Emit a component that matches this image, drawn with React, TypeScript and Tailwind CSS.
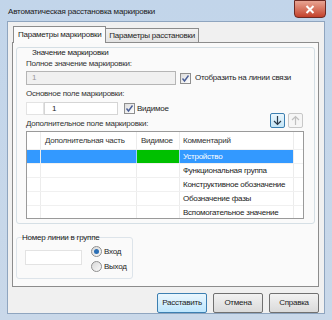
import React from 'react';

const font = { fontFamily: '"Liberation Sans", Arial, sans-serif' };

function Check({ checked = true }: { checked?: boolean }) {
  return (
    <span className="w-[11px] h-[11px] border border-[#8f8f8f] bg-gradient-to-br from-[#dcdcdc] to-[#ffffff] flex items-center justify-center shrink-0">
      {checked && (
        <svg width="9" height="9" viewBox="0 0 9 9">
          <path d="M1.5 4.5 L3.5 7 L7.5 1.5" fill="none" stroke="#4a5f97" strokeWidth="1.4" />
        </svg>
      )}
    </span>
  );
}

function Radio({ checked }: { checked?: boolean }) {
  return (
    <span className="w-[11px] h-[11px] rounded-full border border-[#8f8f8f] bg-gradient-to-br from-[#d8d8d8] to-[#fafafa] flex items-center justify-center shrink-0">
      {checked && <span className="w-[5px] h-[5px] rounded-full bg-[#2b6fb5]" />}
    </span>
  );
}

function Btn({ label, primary }: { label: string; primary?: boolean }) {
  return (
    <div
      className={`w-[50px] h-[20px] rounded-[2px] border flex items-center justify-center text-[#1b1b1b] ${
        primary
          ? 'border-[#3c7fb1] bg-gradient-to-b from-[#eaf6fd] to-[#bee6fd]'
          : 'border-[#707070] bg-gradient-to-b from-[#f2f2f2] to-[#dadada]'
      }`}
    >
      {label}
    </div>
  );
}

const rows = [
  'Устройство',
  'Функциональная группа',
  'Конструктивное обозначение',
  'Обозначение фазы',
  'Вспомогательное значение',
];

export default function App() {
  return (
    <div style={font} className="w-[332px] h-[320px] bg-gradient-to-b from-[#c2d5ea] to-[#c9d8e9] flex flex-col overflow-hidden text-[8px] tracking-[-0.25px] text-[#1e1e1e]">
      {/* title bar */}
      <div className="h-[21px] flex items-start shrink-0">
        <div className="pl-[8px] pt-[6px] text-[8px] tracking-[-0.2px] text-[#1a1a1a] flex-1">Автоматическая расстановка маркировки</div>
        <div className="mr-[6px] w-[32px] h-[18px] rounded-b-[4px] border border-[#6d2a23] bg-gradient-to-b from-[#e8a493] to-[#c2402a] flex items-center justify-center">
          <svg width="10" height="9" viewBox="0 0 10 9">
            <path d="M1.5 1 L8.5 8 M8.5 1 L1.5 8" stroke="#fff" strokeWidth="2" />
          </svg>
        </div>
      </div>

      {/* client area */}
      <div className="mx-[7px] h-[293px] bg-[#f0f0f0] border border-[#8fa5bf] pt-[3px] pl-[4px] pr-[5px] flex flex-col">
        {/* tabs */}
        <div className="flex items-end h-[17px] pl-[1px]">
          <div className="h-[17px] px-[4px] border border-b-0 border-[#8c8c8c] bg-[#fbfbfb] flex items-center relative top-[1px] z-10">
            Параметры маркировки
          </div>
          <div className="h-[14px] px-[3px] border border-l-0 border-b-0 border-[#8c8c8c] bg-gradient-to-b from-[#f2f2f2] to-[#e3e3e3] flex items-center">
            Параметры расстановки
          </div>
        </div>

        {/* tab panel */}
        <div className="h-[245px] border border-[#8c8c8c] bg-[#fafafa] px-[3px] pt-[4px] flex flex-col">
          {/* group 1 */}
          <div className="h-[177px] border border-[#d5dfe5] rounded-[3px] pl-[9px] pr-[10px] flex flex-col shrink-0">
            <div className="pl-[6px] -mt-[2px] h-[13px] leading-[13px] text-[#222]">Значение маркировки</div>
            <div className="h-[12px] leading-[12px] -mt-[1px] text-[#333]">Полное значение маркировки:</div>
            <div className="flex items-center gap-[4px] mt-[1px]">
              <div className="w-[150px] h-[14px] border border-[#b5b5b5] bg-[#f0f0f0] text-[#9a9a9a] pl-[5px] flex items-center">1</div>
              <Check />
              <span>Отобразить на линии связи</span>
            </div>
            <div className="h-[12px] leading-[12px] mt-[3px] text-[#333]">Основное поле маркировки:</div>
            <div className="flex items-center mt-[2px]">
              <div className="w-[18px] h-[13px] border border-[#e3e3e3] bg-white" />
              <div className="w-[74px] h-[13px] border border-[#d5d5d5] bg-white pl-[7px] flex items-center">1</div>
              <div className="ml-[6px] flex items-center gap-[2px]">
                <Check />
                <span>Видимое</span>
              </div>
            </div>
            <div className="flex items-end justify-between h-[16px] -mt-[1px]">
              <span className="leading-[12px] text-[#333]">Дополнительное поле маркировки:</span>
              <div className="flex gap-[3px] pr-[1px] pb-[2px]">
                <div className="w-[15px] h-[15px] border border-[#3c7fb1] rounded-[2px] bg-gradient-to-b from-[#eaf6fd] to-[#c4e5f6] flex items-center justify-center">
                  <svg width="9" height="11" viewBox="0 0 9 11">
                    <path d="M4.5 1 V9.5 M1 6 L4.5 9.5 L8 6" fill="none" stroke="#2a3a4a" strokeWidth="1.2" />
                  </svg>
                </div>
                <div className="w-[15px] h-[15px] border border-[#c8c8c8] rounded-[2px] bg-[#f6f6f6] flex items-center justify-center">
                  <svg width="9" height="11" viewBox="0 0 9 11">
                    <path d="M4.5 10 V1.5 M1 5 L4.5 1.5 L8 5" fill="none" stroke="#c0c0c0" strokeWidth="1.2" />
                  </svg>
                </div>
              </div>
            </div>

            {/* grid */}
            <div className="mt-[1px] h-[88px] border border-[#9a9a9a] bg-white flex flex-col overflow-hidden">
              <div className="h-[17px] flex shrink-0 text-[#333]">
                <div className="w-[14px] border-r border-[#ececec]" />
                <div className="w-[96px] pl-[4px] flex items-center border-r border-[#ececec]">Дополнительная часть</div>
                <div className="w-[43px] pl-[4px] flex items-center border-r border-[#ececec]">Видимое</div>
                <div className="w-[114px] pl-[3px] flex items-center border-r border-[#ececec]">Комментарий</div>
                <div className="flex-1" />
              </div>
              {rows.map((r, i) => (
                <div key={r} className="h-[14px] flex shrink-0 border-t border-[#f0f0f0]">
                  <div className={`w-[14px] border-r border-[#ececec] ${i === 0 ? 'bg-[#3399ff]' : ''}`} />
                  <div className={`w-[96px] border-r ${i === 0 ? 'bg-[#3399ff] border-[#9fd0ff]' : 'border-[#ececec]'}`} />
                  <div className={`w-[43px] border-r ${i === 0 ? 'bg-[#00c000] border-[#9fd0ff]' : 'border-[#ececec]'}`} />
                  <div className={`w-[114px] pl-[3px] flex items-center border-r border-[#ececec] ${i === 0 ? 'bg-[#3399ff] text-white' : 'text-[#222]'}`}>{r}</div>
                  <div className="flex-1" />
                </div>
              ))}
            </div>
          </div>

          {/* group 2 */}
          <div className="mt-[13px] w-[117px] h-[42px] border border-[#dde4ea] rounded-[3px] flex flex-col shrink-0">
            <div className="pl-[5px] -mt-[6px] h-[12px] leading-[12px] text-[#222]">Номер линии в группе</div>
            <div className="flex pl-[8px] mt-[2px]">
              <div className="w-[57px] h-[15px] border border-[#e3e3e3] bg-white mt-[4px]" />
              <div className="ml-[9px] flex flex-col gap-[4px]">
                <div className="h-[11px] flex items-center gap-[2px]"><Radio checked /><span>Вход</span></div>
                <div className="h-[11px] flex items-center gap-[2px]"><Radio /><span>Выход</span></div>
              </div>
            </div>
          </div>
        </div>

        {/* buttons */}
        <div className="flex justify-end gap-[6px] pt-[6px]">
          <Btn label="Расставить" primary />
          <Btn label="Отмена" />
          <Btn label="Справка" />
        </div>
      </div>
    </div>
  );
}
